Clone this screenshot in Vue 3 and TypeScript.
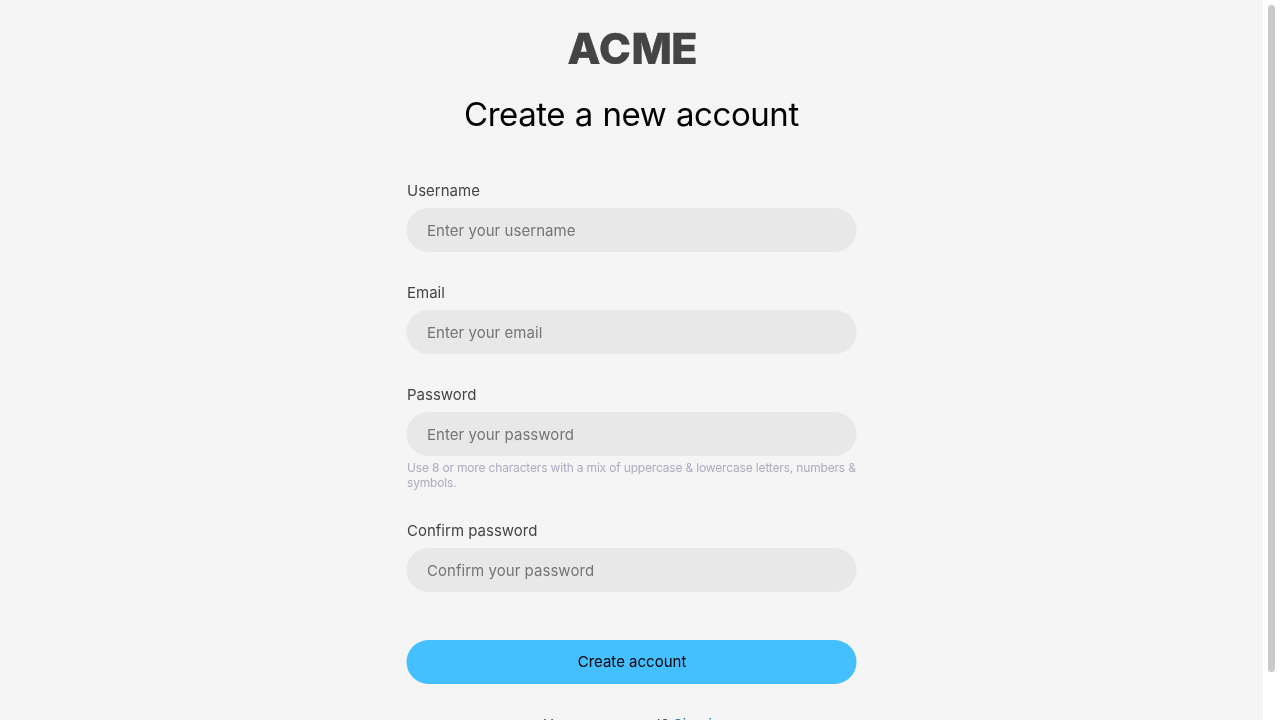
<script setup lang="ts">
interface Field {
  id: string
  label: string
  type: string
  placeholder: string
  hint?: string
}

const fields: Field[] = [
  { id: 'username', label: 'Username', type: 'text', placeholder: 'Enter your username' },
  { id: 'email', label: 'Email', type: 'email', placeholder: 'Enter your email' },
  {
    id: 'password',
    label: 'Password',
    type: 'password',
    placeholder: 'Enter your password',
    hint: 'Use 8 or more characters with a mix of uppercase & lowercase letters, numbers & symbols.',
  },
  { id: 'confirm', label: 'Confirm password', type: 'password', placeholder: 'Confirm your password' },
]
</script>

<template>
  <div class="window">
    <main class="page">
      <svg class="logo" viewBox="0 0 128 32" width="128" height="32" role="img" aria-label="ACME">
        <text x="-0.4 31 63.4 103.2" y="31.6">ACME</text>
      </svg>
      <h1>Create a new account</h1>
      <form @submit.prevent>
        <div v-for="f in fields" :key="f.id" class="field">
          <label :for="f.id">{{ f.label }}</label>
          <input :id="f.id" :type="f.type" :placeholder="f.placeholder" />
          <p v-if="f.hint" class="hint">{{ f.hint }}</p>
        </div>
        <button type="submit">Create account</button>
      </form>
      <p class="signin">Have an account? <a href="#">Sign in</a></p>
    </main>
    <div class="track"><div class="thumb"></div></div>
  </div>
</template>

<style>
html,
body {
  margin: 0;
  overflow: hidden;
}
</style>

<style scoped>
.window {
  display: flex;
  height: 720px;
  overflow: hidden;
  background: #fff;
  font-family: Inter, "Liberation Sans", sans-serif;
  font-size: 15px;
  color: #444;
}
.page {
  flex: 1;
  display: flex;
  flex-direction: column;
  align-items: center;
  box-sizing: border-box;
  padding-top: 32px;
  background: #f5f5f5;
}
.logo {
  display: block;
  flex: none;
  overflow: hidden;
  will-change: transform;
}
.logo text {
  font-family: Inter, sans-serif;
  font-size: 42.8px;
  font-weight: 800;
  fill: #444;
  stroke: #444;
  stroke-width: 0.5px;
}
h1 {
  margin: 30px 0 46px;
  font-size: 33px;
  line-height: 40px;
  font-weight: 400;
  letter-spacing: -0.44px;
  word-spacing: 0.8px;
  color: #000;
  will-change: transform;
}
form {
  width: 450px;
  padding: 0 4px;
  margin-left: 1px;
  transform: translateX(-0.5px);
  will-change: transform;
}
.field {
  margin-bottom: 30px;
}
label {
  display: block;
  height: 28px;
  padding-left: 0.5px;
  line-height: 22px;
  box-sizing: border-box;
}
input {
  display: block;
  box-sizing: border-box;
  width: 100%;
  height: 44px;
  margin: 0;
  padding: 0 20px 0 20.5px;
  border: 0;
  border-radius: 22px;
  background: #e8e8e8;
  font: inherit;
  letter-spacing: 0.04px;
  color: #444;
  outline: none;
}
input::placeholder {
  color: #757575;
}
.hint {
  margin: 4px -4px 0 0;
  padding-left: 0.5px;
  font-size: 12px;
  line-height: 15px;
  letter-spacing: -0.17px;
  color: #acacbf;
}
button {
  display: block;
  width: 100%;
  height: 44px;
  margin-top: 48px;
  padding: 0 0 1px 1px;
  border: 0;
  border-radius: 22px;
  background: #44bfff;
  font: inherit;
  color: #000;
}
.signin {
  flex: none;
  margin: 30px 0 0;
  line-height: 22px;
  letter-spacing: -0.06px;
  transform: translateY(0.4px);
  will-change: transform;
}
.signin a {
  color: #1a73b0;
  text-decoration: none;
}
.track {
  flex: none;
  width: 17px;
  box-sizing: border-box;
  padding: 5px 5px 0;
  background: #fff;
}
.thumb {
  height: 667px;
  border-radius: 4px;
  background: #cacaca;
}
</style>
